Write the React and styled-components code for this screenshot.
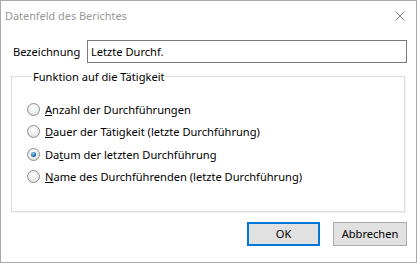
import styled, { createGlobalStyle } from 'styled-components';

const GlobalStyle = createGlobalStyle`
  html, body {
    margin: 0;
    padding: 0;
    background: #ffffff;
  }
  body {
    font-family: "Noto Sans", "Open Sans", sans-serif;
    font-size: 11.1px;
  }
`;

const Window = styled.div`
  width: 415px;
  height: 261px;
  border: 1px solid #a9a9a9;
  background: #ffffff;
  display: flex;
  flex-direction: column;
  color: #000;
`;

const TitleBar = styled.div`
  height: 29px;
  display: flex;
  align-items: center;
  justify-content: space-between;
  padding: 0 11px 0 4px;
  color: #999999;
  font-size: 10.9px;
`;

const Body = styled.div`
  flex: 1;
  display: flex;
  flex-direction: column;
  padding: 10px 9px 0 10px;
`;

const FieldRow = styled.div`
  display: flex;
  align-items: center;
  gap: 7px;
`;

const Label = styled.label`
  padding-left: 2px;
  width: 67px;
`;

const TextInput = styled.div`
  flex: 1;
  height: 21px;
  border: 1px solid #7a7a7a;
  display: flex;
  align-items: center;
  padding-left: 3px;
`;

const Group = styled.fieldset`
  margin: 6px 2px 0 0;
  padding: 17px 0 26px 15px;
  border: 1px solid #dcdcdc;
  box-shadow: inset -1px -1px 0 #ffffff, 1px 1px 0 #f2f2f2;
  display: flex;
  flex-direction: column;
  gap: 6.5px;
  min-width: 0;

  legend {
    padding: 0 1px;
    margin-left: 5px;
  }
`;

const Option = styled.div`
  display: flex;
  align-items: center;
  gap: 5px;
  height: 16px;
`;

const Radio = styled.span`
  width: 11px;
  height: 11px;
  border-radius: 50%;
  border: 1px solid #8f8f8f;
  background: radial-gradient(circle at 50% 35%, #ffffff 0%, #ececec 55%, #d2d2d2 100%);
  display: flex;
  align-items: center;
  justify-content: center;
  flex-shrink: 0;

  &::after {
    content: '';
    display: ${p => (p.$checked ? 'block' : 'none')};
    width: 5px;
    height: 5px;
    border-radius: 50%;
    background: radial-gradient(circle at 40% 35%, #9ad4f7 0%, #1a6fb5 55%, #073f73 100%);
  }
`;

const Buttons = styled.div`
  display: flex;
  justify-content: flex-end;
  gap: 13px;
  margin-top: 10px;
`;

const Button = styled.button`
  width: ${p => (p.$wide ? '74px' : '73px')};
  height: 24px;
  font-family: inherit;
  font-size: 11.1px;
  color: #000;
  background: #e1e1e1;
  border: ${p => (p.$default ? '2px solid #0078d7' : '1px solid #adadad')};
  padding: 0;
`;

const options = [
  { key: 'A', before: '', rest: 'nzahl der Durchführungen' },
  { key: 'D', before: '', rest: 'auer der Tätigkeit (letzte Durchführung)' },
  { key: 't', before: 'Da', rest: 'um der letzten Durchführung', checked: true },
  { key: 'N', before: '', rest: 'ame des Durchführenden (letzte Durchführung)' },
];

function CloseIcon() {
  return (
    <svg width="10" height="10" viewBox="0 0 10 10">
      <path d="M0.5 0.5 L9.5 9.5 M9.5 0.5 L0.5 9.5" stroke="#8a8a8a" strokeWidth="1" fill="none" />
    </svg>
  );
}

export default function App() {
  return (
    <>
      <GlobalStyle />
      <Window>
        <TitleBar>
          <span>Datenfeld des Berichtes</span>
          <CloseIcon />
        </TitleBar>
        <Body>
          <FieldRow>
            <Label>Bezeichnung</Label>
            <TextInput>Letzte Durchf.</TextInput>
          </FieldRow>
          <Group>
            <legend>Funktion auf die Tätigkeit</legend>
            {options.map(o => (
              <Option key={o.rest}>
                <Radio $checked={o.checked} />
                <span>
                  {o.before}
                  <u>{o.key}</u>
                  {o.rest}
                </span>
              </Option>
            ))}
          </Group>
          <Buttons>
            <Button $default>OK</Button>
            <Button $wide>Abbrechen</Button>
          </Buttons>
        </Body>
      </Window>
    </>
  );
}
